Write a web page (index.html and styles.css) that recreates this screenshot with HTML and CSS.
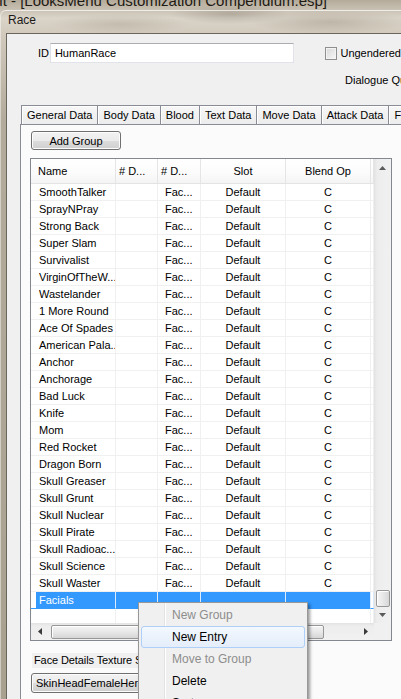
FILE: index.html
```html
<!DOCTYPE html>
<html lang="en">
<head>
    <meta charset="UTF-8">
    <meta name="viewport" content="width=device-width, initial-scale=1.0">
    <title>Race</title>
    <link rel="stylesheet" href="styles.css">
</head>
<body>
    <div class="parent-caption"><span>Edit - [LooksMenu Customization Compendium.esp]</span></div>

    <div class="window">
        <div class="win-caption">Race</div>

        <div class="win-client">
            <div class="id-row">
                <span class="id-label">ID</span>
                <div class="textbox">HumanRace</div>
                <span class="checkbox"></span>
                <span class="check-label">Ungendered</span>
            </div>
            <div class="dialogue-row">Dialogue Quest</div>

            <div class="tabs">
                <div class="tab">General Data</div>
                <div class="tab">Body Data</div>
                <div class="tab">Blood</div>
                <div class="tab">Text Data</div>
                <div class="tab">Move Data</div>
                <div class="tab">Attack Data</div>
                <div class="tab">Face Data</div>
            </div>

            <div class="tab-page">
                <button class="btn add-group">Add Group</button>

                <div class="list">
                    <div class="list-view">
                        <div class="cols list-head">
                            <div class="hcell name">Name</div>
                            <div class="hcell short">#&nbsp;D...</div>
                            <div class="hcell short">#&nbsp;D...</div>
                            <div class="hcell center">Slot</div>
                            <div class="hcell center">Blend Op</div>
                            <div class="hcell"></div>
                        </div>
                        <div id="rows"></div>
                    </div>

                    <div class="vscroll">
                        <div class="sbtn">
                            <svg width="7" height="4" viewBox="0 0 7 4"><polygon points="0,4 3.5,0 7,4" fill="#5a5a5a"/></svg>
                        </div>
                        <div class="vtrack"></div>
                        <div class="vthumb"></div>
                        <div class="sbtn down">
                            <svg width="7" height="4" viewBox="0 0 7 4"><polygon points="0,0 7,0 3.5,4" fill="#5a5a5a"/></svg>
                        </div>
                    </div>

                    <div class="hscroll">
                        <div class="sbtn">
                            <svg width="4" height="7" viewBox="0 0 4 7"><polygon points="4,0 4,7 0,3.5" fill="#3a3a3a"/></svg>
                        </div>
                        <div class="hthumb"></div>
                        <div class="htrack"></div>
                        <div class="sbtn">
                            <svg width="4" height="7" viewBox="0 0 4 7"><polygon points="0,0 4,3.5 0,7" fill="#3a3a3a"/></svg>
                        </div>
                    </div>
                    <div class="corner"></div>
                </div>

                <div class="field-label">Face Details Texture Set</div>
                <div class="btn combo">SkinHeadFemaleHero</div>
            </div>
        </div>
    </div>

    <div class="menu">
        <div class="menu-item disabled">New Group</div>
        <div class="menu-item hover">New Entry</div>
        <div class="menu-item disabled">Move to Group</div>
        <div class="menu-item">Delete</div>
        <div class="menu-item">Sort</div>
    </div>

    <script>
        const names = [
            "SmoothTalker", "SprayNPray", "Strong Back", "Super Slam", "Survivalist",
            "VirginOfTheW...", "Wastelander", "1 More Round", "Ace Of Spades", "American Pala...",
            "Anchor", "Anchorage", "Bad Luck", "Knife", "Mom", "Red Rocket", "Dragon Born",
            "Skull Greaser", "Skull Grunt", "Skull Nuclear", "Skull Pirate", "Skull Radioac...",
            "Skull Science", "Skull Waster"
        ];

        const rows = document.getElementById("rows");

        function addRow(cells, extraClass) {
            const row = document.createElement("div");
            row.className = "cols row" + (extraClass ? " " + extraClass : "");
            const classes = ["cell name", "cell", "cell fac", "cell center", "cell center", "cell"];
            classes.forEach(function (cls, i) {
                const cell = document.createElement("div");
                cell.className = cls;
                cell.textContent = cells[i] || "";
                row.appendChild(cell);
            });
            rows.appendChild(row);
        }

        names.forEach(function (n) {
            addRow([n, "", "Fac...", "Default", "C", ""]);
        });
        addRow(["Facials"], "selected");
        addRow([]);
    </script>
</body>
</html>
```

FILE: styles.css
```css
* {
    box-sizing: border-box;
}

/* Glass background */
body {
    margin: 0;
    width: 401px;
    height: 699px;
    overflow: hidden;
    position: relative;
    font-family: "Liberation Sans", Arial, sans-serif;
    font-size: 11px;
    color: #000;
    background:
        radial-gradient(ellipse 60px 10px at 230px 14px, rgba(120, 110, 95, 0.35), transparent),
        radial-gradient(ellipse 80px 12px at 330px 22px, rgba(130, 120, 100, 0.3), transparent),
        radial-gradient(ellipse 70px 10px at 120px 24px, rgba(140, 130, 110, 0.25), transparent),
        linear-gradient(180deg, #b4ab9b 0, #c9c1b3 10px, #dad4c9 18px, #d2cbbe 32px, #b3ab9b 120px, #a9a190 100%);
}

.parent-caption {
    height: 10px;
    overflow: hidden;
}

.parent-caption span {
    display: block;
    margin-top: -8px;
    margin-left: -19px;
    font-size: 15px;
    line-height: 18px;
    color: #1e1a14;
    white-space: nowrap;
}

/* Race window */
.window {
    height: 689px;
    display: flex;
    flex-direction: column;
    border-top: 1px solid rgba(255, 255, 255, 0.7);
    border-left: 1px solid rgba(255, 255, 255, 0.45);
    border-top-left-radius: 6px;
}

.win-caption {
    height: 22px;
    padding-left: 7px;
    line-height: 18px;
    font-size: 12px;
    color: #1a1a1a;
}

.win-client {
    flex: 1;
    margin-left: 5px;
    border-left: 1px solid #6b665d;
    border-top: 1px solid #6b665d;
    background: #f0f0f0;
    overflow: hidden;
}

/* ID row */
.id-row {
    display: flex;
    align-items: center;
    height: 20px;
    margin-top: 9px;
    padding-left: 31px;
    white-space: nowrap;
}

.id-label {
    width: 12px;
}

.textbox {
    width: 245px;
    height: 20px;
    border: 1px solid #e2e3ea;
    border-top-color: #abadb3;
    border-left-color: #dbdfe6;
    background: #fff;
    padding-left: 4px;
    line-height: 18px;
}

.checkbox {
    width: 13px;
    height: 13px;
    margin-left: 31px;
    border: 1px solid #8e8f8f;
    background: linear-gradient(135deg, #d8d8d8, #f7f7f7);
    box-shadow: inset 0 0 0 1px #f4f4f4;
}

.check-label {
    margin-left: 3px;
}

.dialogue-row {
    height: 14px;
    margin-top: 10px;
    padding-left: 338px;
    line-height: 14px;
    white-space: nowrap;
}

/* Tabs */
.tabs {
    display: flex;
    margin-top: 18px;
    padding-left: 14px;
    height: 19px;
    white-space: nowrap;
}

.tab {
    flex: none;
    height: 19px;
    padding: 0 5px;
    line-height: 18px;
    border: 1px solid #898c95;
    border-bottom: none;
    border-right: none;
    background: linear-gradient(#f7f7f7, #ececec);
    box-shadow: inset 1px 1px 0 #fff;
}

.tab-page {
    height: 600px;
    margin-left: 13px;
    border: 1px solid #898c95;
    border-right: none;
    background: #fbfbfb;
    padding-top: 6px;
}

/* Buttons */
.btn {
    display: block;
    font-family: inherit;
    font-size: 11px;
    color: #000;
    border: 1px solid #707070;
    border-radius: 3px;
    background: linear-gradient(#f2f2f2, #ebebeb 50%, #dddddd 50%, #cfcfcf);
    box-shadow: inset 0 0 0 1px #fcfcfc;
}

.add-group {
    width: 90px;
    height: 19px;
    margin-left: 10px;
    padding: 0;
    line-height: 16px;
}

/* List view */
.list {
    width: 362px;
    height: 483px;
    margin: 8px 0 0 9px;
    border: 1px solid #828790;
    background: #fff;
    display: grid;
    grid-template-columns: 343px 17px;
    grid-template-rows: 464px 17px;
}

.list-view {
    overflow: hidden;
}

.cols {
    display: grid;
    grid-template-columns: 85px 42px 43px 85px 85px 3px;
    white-space: nowrap;
}

.list-head {
    height: 25px;
    line-height: 24px;
    border-bottom: 1px solid #e3e3e3;
    background: linear-gradient(#ffffff, #fbfbfb 60%, #f4f4f4);
}

.hcell {
    border-right: 1px solid #e5e5e5;
    overflow: hidden;
}

.hcell.name {
    padding-left: 7px;
}

.hcell.short {
    padding-left: 3px;
}

.center {
    text-align: center;
}

.row {
    height: 17px;
    line-height: 17px;
}

.cell {
    border-right: 1px solid #f0f0f0;
    border-bottom: 1px solid #f0f0f0;
    overflow: hidden;
}

.cell.name {
    padding-left: 8px;
}

.cell.fac {
    padding-left: 7px;
}

.row.selected {
    color: #fff;
    background: linear-gradient(90deg, transparent 5px, #3399ff 5px, #3399ff 340px, transparent 340px);
}

.row.selected .cell {
    border-right-color: #dcebfb;
    border-bottom-color: #3399ff;
}

/* Scrollbars */
.vscroll {
    display: flex;
    flex-direction: column;
    background: linear-gradient(90deg, #e2e2e2, #ededed 3px, #f1f1f1);
}

.sbtn {
    flex: none;
    width: 17px;
    height: 17px;
    display: flex;
    align-items: center;
    justify-content: center;
}

.sbtn.down {
    height: 16px;
}

.vtrack {
    flex: 1;
}

.vthumb {
    flex: none;
    width: 14px;
    height: 17px;
    margin-left: 2px;
    border: 1px solid #979797;
    border-radius: 2px;
    background: linear-gradient(90deg, #f4f4f4, #e8e8e8 50%, #d6d6d6);
    box-shadow: inset 1px 1px 0 #fff;
}

.hscroll {
    display: flex;
    align-items: center;
    background: linear-gradient(#e2e2e2, #ededed 3px, #f1f1f1);
}

.hthumb {
    flex: none;
    width: 273px;
    height: 14px;
    margin-left: 3px;
    border: 1px solid #979797;
    border-radius: 2px;
    background: linear-gradient(#f4f4f4, #e8e8e8 50%, #d6d6d6);
    box-shadow: inset 1px 1px 0 #fff;
}

.htrack {
    flex: 1;
}

.corner {
    background: #f0f0f0;
}

/* Below the list */
.field-label {
    display: inline-block;
    margin: 12px 0 0 11px;
    height: 15px;
    padding: 0 2px;
    line-height: 15px;
    background: #f0f0f0;
    letter-spacing: -0.1px;
    white-space: nowrap;
}

.combo {
    width: 180px;
    height: 20px;
    margin: 5px 0 0 10px;
    padding-left: 4px;
    line-height: 18px;
    white-space: nowrap;
}

/* Context menu */
.menu {
    position: absolute;
    left: 138px;
    top: 602px;
    width: 170px;
    padding: 1px;
    border: 1px solid #979797;
    background: #f0f0f0;
    box-shadow: 2px 2px 3px rgba(0, 0, 0, 0.4);
    font-size: 12px;
}

.menu::before {
    content: "";
    position: absolute;
    left: 25px;
    top: 0;
    bottom: 0;
    width: 1px;
    background: #e2e3e3;
    border-right: 1px solid #fff;
    box-sizing: content-box;
}

.menu-item {
    position: relative;
    height: 22px;
    margin: 0 1px;
    padding-left: 30px;
    line-height: 20px;
    border: 1px solid transparent;
    border-radius: 3px;
    color: #000;
}

.menu-item.disabled {
    color: #8d8d8d;
}

.menu-item.hover {
    border-color: #aecff7;
    background: linear-gradient(#f3f8fe, #e4edfa);
}
```
